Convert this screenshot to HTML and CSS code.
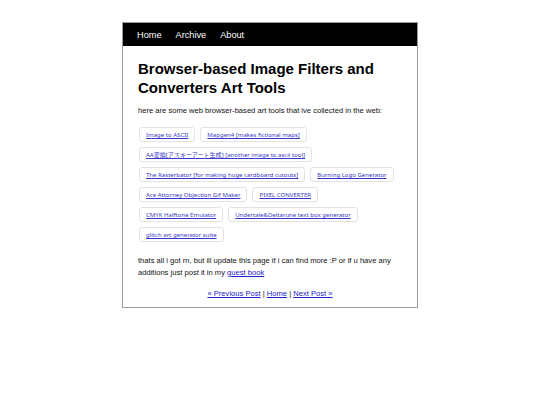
FILE: index.html
```html
<!DOCTYPE html>
<html>
<head>
<meta charset="utf-8">
<link rel="stylesheet" href="styles.css">
</head>
<body>
<div class="page">
  <nav class="nav">
    <a href="#">Home</a>
    <a href="#">Archive</a>
    <a href="#">About</a>
  </nav>
  <main class="content">
    <h1 class="title">Browser-based Image Filters and Converters Art Tools</h1>
    <p class="intro">here are some web browser-based art tools that ive collected in the web:</p>
    <div class="tools">
      <a class="tool" href="#">Image to ASCII</a>
      <a class="tool" href="#">Mapgen4 [makes fictional maps]</a>
      <a class="tool" href="#">AA変換[アスキーアート生成] [another image to ascii tool]</a>
      <a class="tool" href="#">The Rasterbator [for making huge cardboard cutouts]</a>
      <a class="tool" href="#">Burning Logo Generator</a>
      <a class="tool" href="#">Ace Attorney Objection Gif Maker</a>
      <a class="tool" href="#">PIXEL CONVERTER</a>
      <a class="tool" href="#">CMYK Halftone Emulator</a>
      <a class="tool" href="#">Undertale&amp;Deltarune text box generator</a>
      <a class="tool" href="#">glitch art generator suite</a>
    </div>
    <p class="outro">thats all i got rn, but ill update this page if i can find more :P or if u have any additions just post it in my <a href="#">guest book</a></p>
    <p class="pager"><a href="#">« Previous Post</a> | <a href="#">Home</a> | <a href="#">Next Post »</a></p>
  </main>
</div>
</body>
</html>
```

FILE: styles.css
```css
body {
  margin: 0;
  padding-top: 22px;
  background: #fff;
  font-family: "Liberation Sans", Arial, sans-serif;
  color: #111;
}
.page {
  width: 296px;
  margin: 0 auto;
  border: 1px solid #9a9a9a;
  box-sizing: border-box;
  background: #fff;
}
.nav {
  background: #000;
  height: 23px;
  display: flex;
  align-items: center;
  padding-left: 14px;
  gap: 14px;
}
.nav a {
  color: #fff;
  font-size: 9.2px;
  text-decoration: none;
}
.content {
  padding: 14px 15px 7px;
}
.title {
  font-size: 15px;
  line-height: 18.5px;
  font-weight: bold;
  margin: 0 0 8px;
  color: #000;
}
.intro, .outro {
  font-size: 7.6px;
  line-height: 12px;
  margin: 0;
}
.tools {
  display: flex;
  flex-wrap: wrap;
  gap: 5px 5px;
  margin: 10px 0 13px;
  padding-left: 1px;
}
.tool {
  display: inline-block;
  height: 15px;
  line-height: 14px;
  box-sizing: border-box;
  padding: 0 6px;
  border: 1px solid #e2e2e2;
  border-radius: 3px;
  font-family: "Noto Sans", "Noto Sans CJK JP", sans-serif;
  font-size: 6.05px;
  color: #3838c8;
}
a { color: #2222cc; }
.pager {
  text-align: center;
  font-size: 7.6px;
  line-height: 12px;
  margin: 9px 0 0;
}
```
